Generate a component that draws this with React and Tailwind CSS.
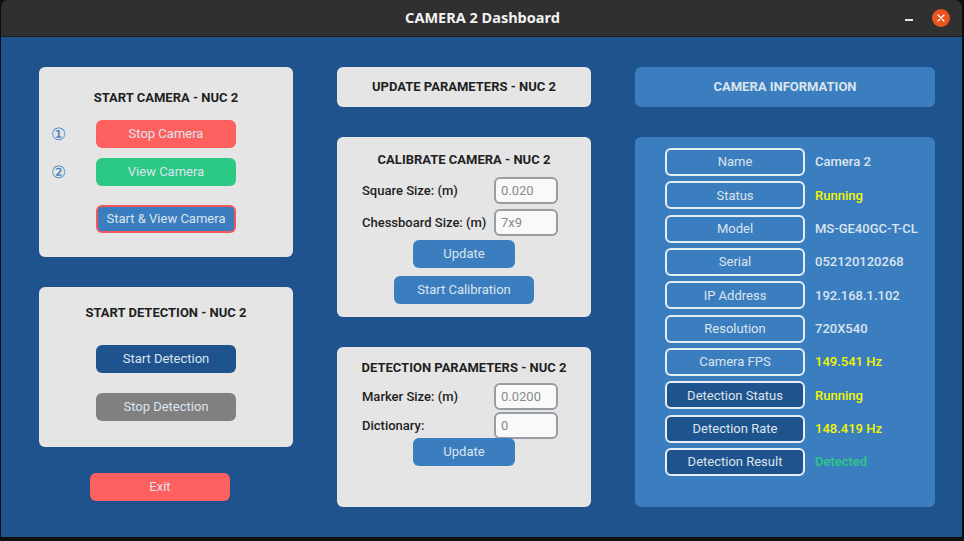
import React from "react";

const font = { fontFamily: "Roboto, 'Liberation Sans', sans-serif" };

function Btn({ children, className = "", w = "w-[140px]" }) {
  return (
    <div
      className={`${w} h-[28px] rounded-[6px] flex items-center justify-center text-[13px] text-[#dce4ee] ${className}`}
    >
      {children}
    </div>
  );
}

function Field({ label, value }) {
  return (
    <div className="flex items-center pl-[25px]">
      <div className="w-[132px] text-[13px] font-medium text-[#1f1f1f]">{label}</div>
      <div className="w-[64px] h-[27px] rounded-[6px] border-2 border-[#979da2] bg-[#f9f9f9] flex items-center pl-[5px] text-[13px] text-[#8a8a8a]">
        {value}
      </div>
    </div>
  );
}

const info = [
  { k: "Name", v: "Camera 2", c: "text-[#dce4ee]" },
  { k: "Status", v: "Running", c: "text-[#f5f500]" },
  { k: "Model", v: "MS-GE40GC-T-CL", c: "text-[#dce4ee]" },
  { k: "Serial", v: "052120120268", c: "text-[#dce4ee]" },
  { k: "IP Address", v: "192.168.1.102", c: "text-[#dce4ee]" },
  { k: "Resolution", v: "720X540", c: "text-[#dce4ee]" },
  { k: "Camera FPS", v: "149.541 Hz", c: "text-[#f5f500]" },
  { k: "Detection Status", v: "Running", c: "text-[#f5f500]", dark: true },
  { k: "Detection Rate", v: "148.419 Hz", c: "text-[#f5f500]", dark: true },
  { k: "Detection Result", v: "Detected", c: "text-[#2cc985]", dark: true },
];

export default function App() {
  return (
    <div className="w-[964px] h-[541px] bg-[#0e0e0e] flex flex-col pl-[1px] pr-[2px] pb-[4px]" style={font}>
      {/* Title bar */}
      <div className="h-[37px] shrink-0 bg-[#303030] rounded-t-[7px] border-b border-[#1c1c1c] flex items-center">
        <div
          className="flex-1 text-center text-[14.5px] font-bold text-[#f2f2f2] pl-[59px]"
          style={{ fontFamily: "'Noto Sans', 'DejaVu Sans', sans-serif" }}
        >
          CAMERA 2 Dashboard
        </div>
        <div className="flex items-center gap-[19px] pr-[12px]">
          <div className="w-[8px] h-[1.5px] bg-[#e8e8e8] mt-[4px]" />
          <div className="w-[18px] h-[18px] rounded-full bg-[#e95420] flex items-center justify-center">
            <svg width="8" height="8" viewBox="0 0 8 8">
              <path d="M1 1L7 7M7 1L1 7" stroke="#fff" strokeWidth="1.3" strokeLinecap="round" />
            </svg>
          </div>
        </div>
      </div>

      {/* Body */}
      <div className="flex-1 bg-[#1f538d] flex gap-[44px] pl-[38px] pt-[30px]">
        {/* Left column */}
        <div className="w-[254px] flex flex-col">
          <div className="h-[190px] bg-[#e5e5e5] rounded-[6px] flex flex-col pt-[23px]">
            <div className="text-center text-[13px] font-bold text-[#1f1f1f] leading-[16px]">
              START CAMERA - NUC 2
            </div>
            <div className="flex items-center pl-[12px] mt-[14px]">
              <div className="w-[45px] text-[17px] text-[#3a7ebf] leading-none">①</div>
              <Btn className="bg-[#fe6060]">Stop Camera</Btn>
            </div>
            <div className="flex items-center pl-[12px] mt-[10px]">
              <div className="w-[45px] text-[17px] text-[#3a7ebf] leading-none">②</div>
              <Btn className="bg-[#2cc985]">View Camera</Btn>
            </div>
            <div className="flex items-center pl-[57px] mt-[19px]">
              <Btn className="bg-[#3a7ebf] border-2 border-[#f0585c]">Start &amp; View Camera</Btn>
            </div>
          </div>

          <div className="h-[160px] mt-[30px] bg-[#e5e5e5] rounded-[6px] flex flex-col items-center pt-[18px]">
            <div className="text-[13px] font-bold text-[#1f1f1f] leading-[16px] w-[254px] text-center">
              START DETECTION - NUC 2
            </div>
            <Btn className="bg-[#1f538d] mt-[24px]">Start Detection</Btn>
            <Btn className="bg-[#808080] mt-[20px]">Stop Detection</Btn>
          </div>

          <div className="pl-[51px] mt-[26px]">
            <Btn className="bg-[#fe6060]">Exit</Btn>
          </div>
        </div>

        {/* Middle column */}
        <div className="w-[254px] flex flex-col">
          <div className="h-[40px] bg-[#e5e5e5] rounded-[6px] flex items-center justify-center text-[13px] font-bold text-[#1f1f1f]">
            UPDATE PARAMETERS - NUC 2
          </div>

          <div className="h-[180px] mt-[30px] bg-[#e5e5e5] rounded-[6px] flex flex-col pt-[15px]">
            <div className="text-center text-[13px] font-bold text-[#1f1f1f] leading-[16px]">
              CALIBRATE CAMERA - NUC 2
            </div>
            <div className="flex flex-col gap-[5px] mt-[9px]">
              <Field label="Square Size: (m)" value="0.020" />
              <Field label="Chessboard Size: (m)" value="7x9" />
            </div>
            <div className="flex justify-center mt-[4px]">
              <Btn w="w-[102px]" className="bg-[#3a7ebf]">Update</Btn>
            </div>
            <div className="flex justify-center mt-[8px]">
              <Btn className="bg-[#3a7ebf]">Start Calibration</Btn>
            </div>
          </div>

          <div className="h-[160px] mt-[30px] bg-[#e5e5e5] rounded-[6px] flex flex-col pt-[13px]">
            <div className="text-center text-[13px] font-bold text-[#1f1f1f] leading-[16px]">
              DETECTION PARAMETERS - NUC 2
            </div>
            <div className="flex flex-col gap-[2px] mt-[7px]">
              <Field label="Marker Size: (m)" value="0.0200" />
              <Field label="Dictionary:" value="0" />
            </div>
            <div className="flex justify-center -mt-[1px]">
              <Btn w="w-[102px]" className="bg-[#3a7ebf]">Update</Btn>
            </div>
          </div>
        </div>

        {/* Right column */}
        <div className="w-[300px] flex flex-col">
          <div className="h-[40px] bg-[#3a7ebf] rounded-[6px] flex items-center justify-center text-[13px] font-bold text-[#dce4ee]">
            CAMERA INFORMATION
          </div>
          <div className="h-[370px] mt-[30px] bg-[#3a7ebf] rounded-[6px] flex flex-col gap-[5.33px] pt-[11px] pl-[30px]">
            {info.map((r) => (
              <div key={r.k} className="flex items-center gap-[10px]">
                <div
                  className={`w-[140px] h-[28px] rounded-[6px] border-2 border-[#e8eef5] flex items-center justify-center text-[13px] text-[#dce4ee] ${
                    r.dark ? "bg-[#1f538d]" : ""
                  }`}
                >
                  {r.k}
                </div>
                <div className={`text-[13px] font-medium ${r.c}`}>{r.v}</div>
              </div>
            ))}
          </div>
        </div>
      </div>
    </div>
  );
}
